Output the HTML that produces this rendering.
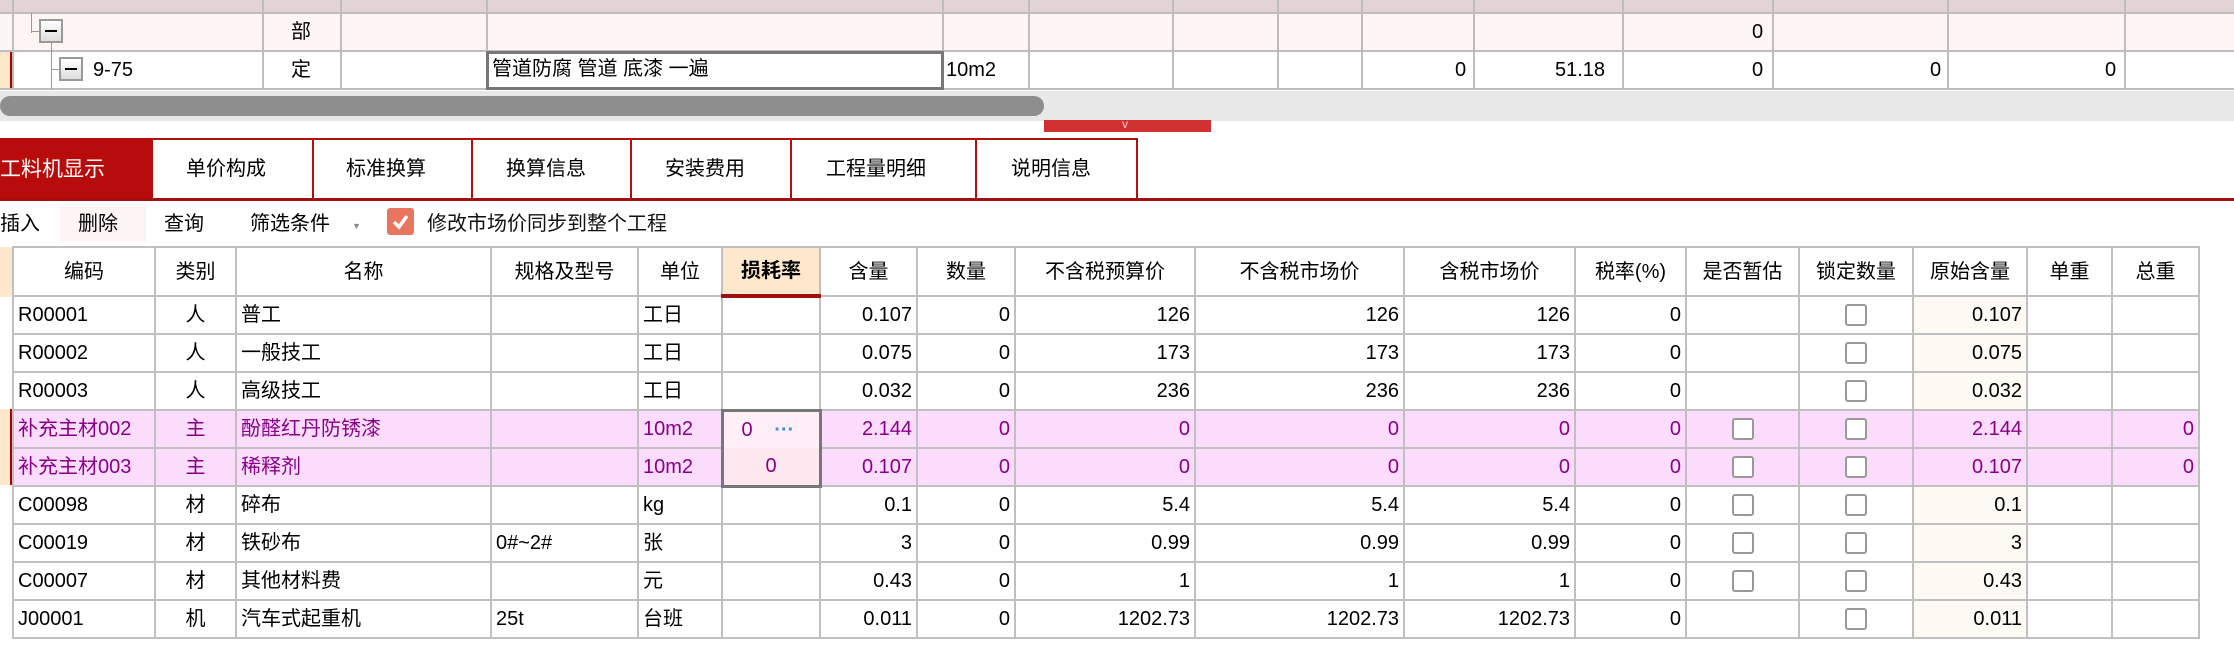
<!DOCTYPE html>
<html><head><meta charset="utf-8"><style>
*{margin:0;padding:0;box-sizing:border-box}
body{width:2234px;height:666px;overflow:hidden;background:#fff;position:relative;font-family:"Liberation Sans","WenQuanYi Zen Hei","Noto Sans CJK SC",sans-serif;font-size:20px;color:#000}
.a{position:absolute}
.vl{position:absolute;width:2px;background:#bdbdbd}
.hl{position:absolute;height:2px;background:#bdbdbd}
.t{position:absolute;white-space:nowrap;line-height:1}
table{position:absolute;border-collapse:collapse;table-layout:fixed}
td{border:2px solid #c0c0c0;height:38px;padding:0 4px;white-space:nowrap;overflow:hidden;font-size:20px;line-height:20px}
td.r{text-align:right}td.c{text-align:center}
tr.p td{background:#fcdcfc;color:#880088}
.cb{display:inline-block;width:22px;height:22px;border:2px solid #999;border-radius:3px;background:#fff;vertical-align:middle}
.org{background:#fdf9f3}
</style></head><body>
<!-- top grid -->
<div class="a" style="left:0;top:0;width:2234px;height:13px;background:#e2d4d4"></div>
<div class="a" style="left:0;top:13px;width:2234px;height:38px;background:#fdf5f4"></div>
<div class="a" style="left:0;top:51px;width:13px;height:38px;background:#fde8cc"></div>
<div class="a" style="left:10px;top:51px;width:4px;height:38px;background:#a00"></div>
<div class="hl" style="left:0;top:12px;width:2234px"></div>
<div class="hl" style="left:0;top:50px;width:2234px"></div>
<div class="hl" style="left:0;top:88px;width:2234px"></div>
<div class="vl" style="left:12px;top:0;height:90px"></div>
<div class="vl" style="left:262px;top:0;height:90px"></div>
<div class="vl" style="left:340px;top:0;height:90px"></div>
<div class="vl" style="left:486px;top:0;height:90px"></div>
<div class="vl" style="left:942px;top:0;height:90px"></div>
<div class="vl" style="left:1028px;top:0;height:90px"></div>
<div class="vl" style="left:1172px;top:0;height:90px"></div>
<div class="vl" style="left:1277px;top:0;height:90px"></div>
<div class="vl" style="left:1361px;top:0;height:90px"></div>
<div class="vl" style="left:1473px;top:0;height:90px"></div>
<div class="vl" style="left:1622px;top:0;height:90px"></div>
<div class="vl" style="left:1772px;top:0;height:90px"></div>
<div class="vl" style="left:1947px;top:0;height:90px"></div>
<div class="vl" style="left:2124px;top:0;height:90px"></div>
<div class="a" style="left:31px;top:13px;width:1px;height:20px;background:#999"></div>
<div class="a" style="left:32px;top:31px;width:8px;height:1px;background:#999"></div>
<div class="a" style="left:39px;top:19px;width:24px;height:24px;border:2px solid #999;background:linear-gradient(#fff,#ddd)"></div>
<div class="a" style="left:45px;top:30px;width:12px;height:2px;background:#000"></div>
<div class="a" style="left:51px;top:43px;width:1px;height:46px;background:#999"></div>
<div class="a" style="left:52px;top:69px;width:8px;height:1px;background:#999"></div>
<div class="a" style="left:59px;top:57px;width:24px;height:24px;border:2px solid #999;background:linear-gradient(#fff,#ddd)"></div>
<div class="a" style="left:65px;top:68px;width:12px;height:2px;background:#000"></div>
<div class="t" style="left:93px;top:60px">9-75</div>
<div class="t" style="left:291px;top:22px">部</div>
<div class="t" style="left:291px;top:60px">定</div>
<div class="a" style="left:486px;top:51px;width:458px;height:39px;border:3px solid #777"></div>
<div class="t" style="left:492px;top:59px">管道防腐 管道 底漆 一遍</div>
<div class="t" style="left:946px;top:60px">10m2</div>
<div class="t" style="left:1752px;top:22px">0</div>
<div class="t" style="left:1455px;top:60px">0</div>
<div class="t" style="left:1555px;top:60px">51.18</div>
<div class="t" style="left:1752px;top:60px">0</div>
<div class="t" style="left:1930px;top:60px">0</div>
<div class="t" style="left:2105px;top:60px">0</div>
<!-- scrollbar -->
<div class="a" style="left:0;top:91px;width:2234px;height:30px;background:#e8e8e8"></div>
<div class="a" style="left:0;top:96px;width:1044px;height:20px;background:#8e8e8e;border-radius:10px"></div>
<div class="a" style="left:1044px;top:120px;width:167px;height:12px;background:#d03030"></div>
<div class="t" style="left:1122px;top:118px;font-size:12px;color:#fcc">v</div>
<!-- tabs -->
<div class="a" style="left:0;top:138px;width:1137px;height:2px;background:#b01010"></div>
<div class="a" style="left:0;top:198px;width:2234px;height:3px;background:#a01010"></div>
<div class="a" style="left:0;top:138px;width:153px;height:61px;background:#b80c0c"></div>
<div class="t" style="left:0;top:159px;color:#fff;font-size:21px">工料机显示</div>
<div class="vl" style="left:312px;top:138px;height:61px;background:#b01010"></div>
<div class="vl" style="left:471px;top:138px;height:61px;background:#b01010"></div>
<div class="vl" style="left:630px;top:138px;height:61px;background:#b01010"></div>
<div class="vl" style="left:790px;top:138px;height:61px;background:#b01010"></div>
<div class="vl" style="left:975px;top:138px;height:61px;background:#b01010"></div>
<div class="vl" style="left:1136px;top:138px;height:61px;background:#b01010"></div>
<div class="t" style="left:186px;top:159px">单价构成</div>
<div class="t" style="left:346px;top:159px">标准换算</div>
<div class="t" style="left:506px;top:159px">换算信息</div>
<div class="t" style="left:665px;top:159px">安装费用</div>
<div class="t" style="left:826px;top:159px">工程量明细</div>
<div class="t" style="left:1011px;top:159px">说明信息</div>
<!-- toolbar -->
<div class="a" style="left:60px;top:206px;width:86px;height:36px;background:#fdf5f5"></div>
<div class="t" style="left:0;top:214px">插入</div>
<div class="t" style="left:78px;top:214px">删除</div>
<div class="t" style="left:164px;top:214px">查询</div>
<div class="t" style="left:250px;top:214px">筛选条件</div>
<div class="t" style="left:352px;top:222px;font-size:9px;color:#888">▼</div>
<div class="a" style="left:387px;top:208px;width:27px;height:27px;background:#e8765e;border-radius:3px"><svg width="27" height="27"><path d="M7 14 L12 19 L20 8" stroke="#fff" stroke-width="3.5" fill="none"/></svg></div>
<div class="t" style="left:427px;top:214px;color:#111">修改市场价同步到整个工程</div>
<!-- lower grid -->
<div class="a" style="left:0;top:247px;width:13px;height:50px;background:#fde8cc"></div>
<div class="a" style="left:0;top:409px;width:13px;height:76px;background:#fde8cc"></div>
<div class="a" style="left:10px;top:409px;width:3px;height:76px;background:#a00"></div>
<table style="left:12px;top:246px;width:2186px">
<colgroup><col style="width:142px"><col style="width:81px"><col style="width:255px"><col style="width:147px"><col style="width:84px"><col style="width:98px"><col style="width:97px"><col style="width:98px"><col style="width:180px"><col style="width:209px"><col style="width:171px"><col style="width:111px"><col style="width:113px"><col style="width:114px"><col style="width:114px"><col style="width:85px"><col style="width:87px"></colgroup>
<tr><td class="c" style="height:49px">编码</td><td class="c">类别</td><td class="c">名称</td><td class="c">规格及型号</td><td class="c">单位</td><td class="c" style="background:#fde8cc;border-bottom:4px solid #a01010;font-weight:bold">损耗率</td><td class="c">含量</td><td class="c">数量</td><td class="c">不含税预算价</td><td class="c">不含税市场价</td><td class="c">含税市场价</td><td class="c">税率(%)</td><td class="c">是否暂估</td><td class="c">锁定数量</td><td class="c">原始含量</td><td class="c">单重</td><td class="c">总重</td></tr>
<tr><td>R00001</td><td class="c">人</td><td>普工</td><td></td><td>工日</td><td></td><td class="r">0.107</td><td class="r">0</td><td class="r">126</td><td class="r">126</td><td class="r">126</td><td class="r">0</td><td></td><td class="c"><span class="cb"></span></td><td class="r org">0.107</td><td></td><td></td></tr>
<tr><td>R00002</td><td class="c">人</td><td>一般技工</td><td></td><td>工日</td><td></td><td class="r">0.075</td><td class="r">0</td><td class="r">173</td><td class="r">173</td><td class="r">173</td><td class="r">0</td><td></td><td class="c"><span class="cb"></span></td><td class="r org">0.075</td><td></td><td></td></tr>
<tr><td>R00003</td><td class="c">人</td><td>高级技工</td><td></td><td>工日</td><td></td><td class="r">0.032</td><td class="r">0</td><td class="r">236</td><td class="r">236</td><td class="r">236</td><td class="r">0</td><td></td><td class="c"><span class="cb"></span></td><td class="r org">0.032</td><td></td><td></td></tr>
<tr class="p"><td>补充主材002</td><td class="c">主</td><td>酚醛红丹防锈漆</td><td></td><td>10m2</td><td style="border:3px solid #777;border-bottom:none;padding-left:18px;background:#fff0f8">0 <span style="color:#3a8ee0;margin-left:16px;font-weight:bold">···</span></td><td class="r">2.144</td><td class="r">0</td><td class="r">0</td><td class="r">0</td><td class="r">0</td><td class="r">0</td><td class="c"><span class="cb"></span></td><td class="c"><span class="cb"></span></td><td class="r">2.144</td><td></td><td class="r">0</td></tr>
<tr class="p"><td>补充主材003</td><td class="c">主</td><td>稀释剂</td><td></td><td>10m2</td><td class="c" style="border:3px solid #777;border-top:none;background:#fde8f0">0</td><td class="r">0.107</td><td class="r">0</td><td class="r">0</td><td class="r">0</td><td class="r">0</td><td class="r">0</td><td class="c"><span class="cb"></span></td><td class="c"><span class="cb"></span></td><td class="r">0.107</td><td></td><td class="r">0</td></tr>
<tr><td>C00098</td><td class="c">材</td><td>碎布</td><td></td><td>kg</td><td></td><td class="r">0.1</td><td class="r">0</td><td class="r">5.4</td><td class="r">5.4</td><td class="r">5.4</td><td class="r">0</td><td class="c"><span class="cb"></span></td><td class="c"><span class="cb"></span></td><td class="r org">0.1</td><td></td><td></td></tr>
<tr><td>C00019</td><td class="c">材</td><td>铁砂布</td><td>0#~2#</td><td>张</td><td></td><td class="r">3</td><td class="r">0</td><td class="r">0.99</td><td class="r">0.99</td><td class="r">0.99</td><td class="r">0</td><td class="c"><span class="cb"></span></td><td class="c"><span class="cb"></span></td><td class="r org">3</td><td></td><td></td></tr>
<tr><td>C00007</td><td class="c">材</td><td>其他材料费</td><td></td><td>元</td><td></td><td class="r">0.43</td><td class="r">0</td><td class="r">1</td><td class="r">1</td><td class="r">1</td><td class="r">0</td><td class="c"><span class="cb"></span></td><td class="c"><span class="cb"></span></td><td class="r org">0.43</td><td></td><td></td></tr>
<tr><td>J00001</td><td class="c">机</td><td>汽车式起重机</td><td>25t</td><td>台班</td><td></td><td class="r">0.011</td><td class="r">0</td><td class="r">1202.73</td><td class="r">1202.73</td><td class="r">1202.73</td><td class="r">0</td><td></td><td class="c"><span class="cb"></span></td><td class="r org">0.011</td><td></td><td></td></tr>
</table>
</body></html>
